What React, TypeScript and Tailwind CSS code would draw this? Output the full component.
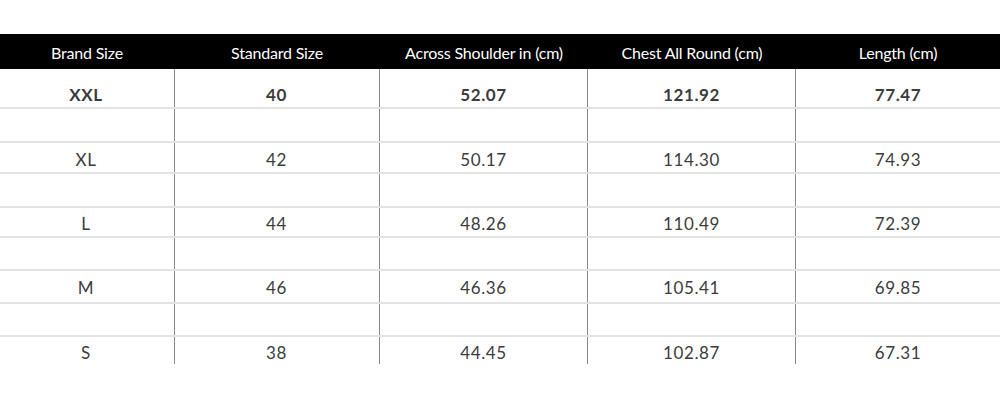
const columns = [
  "Brand Size",
  "Standard Size",
  "Across Shoulder in (cm)",
  "Chest All Round (cm)",
  "Length (cm)",
];

const rows = [
  { cells: ["XXL", "40", "52.07", "121.92", "77.47"], h: "h-[40px]", pt: "pt-[16px]", bold: true },
  { cells: [], h: "h-[34px]" },
  { cells: ["XL", "42", "50.17", "114.30", "74.93"], h: "h-[31px]", pt: "pt-[7px]" },
  { cells: [], h: "h-[34px]" },
  { cells: ["L", "44", "48.26", "110.49", "72.39"], h: "h-[30px]", pt: "pt-[6px]" },
  { cells: [], h: "h-[33px]" },
  { cells: ["M", "46", "46.36", "105.41", "69.85"], h: "h-[33px]", pt: "pt-[7px]" },
  { cells: [], h: "h-[33px]" },
  { cells: ["S", "38", "44.45", "102.87", "67.31"], h: "h-[27px]", pt: "pt-[6px]", last: true },
];

const grid = "grid grid-cols-[174px_206px_208px_208px_204px]";

export default function App() {
  return (
    <div className="w-[1000px] h-[400px] bg-white pt-[34px] font-['Lato','Noto_Sans',sans-serif]">
      {/* Header */}
      <div className={`${grid} h-[35px] bg-black`}>
        {columns.map((c) => (
          <div
            key={c}
            className="flex items-center justify-center text-white text-[16px] tracking-[-0.2px] pt-[3px]"
          >
            {c}
          </div>
        ))}
      </div>

      {/* Body */}
      {rows.map((r, i) => (
        <div
          key={i}
          className={`${grid} ${r.h} ${r.last ? "" : "border-b-2 border-[#e3e3e3]"}`}
        >
          {[0, 1, 2, 3, 4].map((j) => (
            <div
              key={j}
              className={`flex justify-center text-[17px] tracking-[0.6px] text-[#3c3c3c] leading-[20px] ${r.pt ?? ""} ${
                r.bold ? "font-bold" : ""
              } ${j < 4 ? "border-r border-[#8a8a8a]" : ""} ${j === 0 ? "pr-[2px] -mr-px" : ""}`}
            >
              {r.cells[j] ?? ""}
            </div>
          ))}
        </div>
      ))}
    </div>
  );
}
